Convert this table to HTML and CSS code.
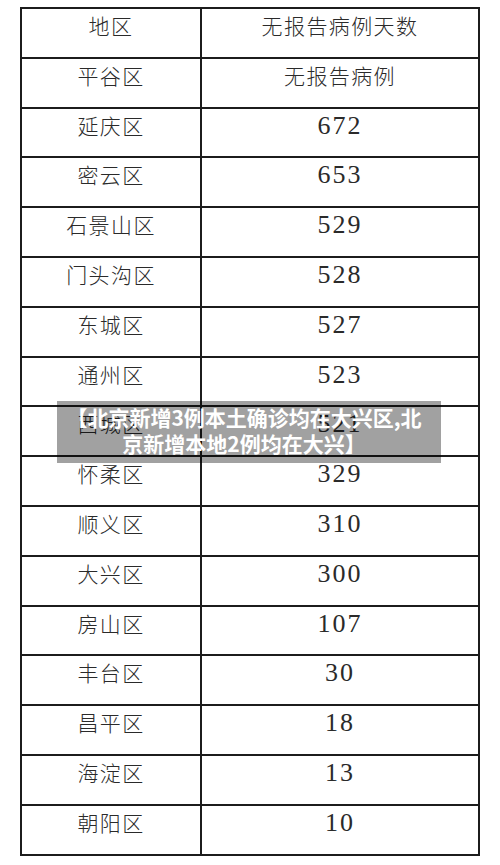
FILE: index.html
```html
<!DOCTYPE html>
<html lang="zh-CN">
<head>
<meta charset="utf-8">
<title>无报告病例天数</title>
<link rel="stylesheet" href="styles.css">
</head>
<body>
<div class="page">
  <div class="table">
    <div class="cell">地区</div><div class="cell">无报告病例天数</div>
    <div class="cell">平谷区</div><div class="cell">无报告病例</div>
    <div class="cell">延庆区</div><div class="cell num">672</div>
    <div class="cell">密云区</div><div class="cell num">653</div>
    <div class="cell">石景山区</div><div class="cell num">529</div>
    <div class="cell">门头沟区</div><div class="cell num">528</div>
    <div class="cell">东城区</div><div class="cell num">527</div>
    <div class="cell">通州区</div><div class="cell num">523</div>
    <div class="cell">西城区</div><div class="cell num">521</div>
    <div class="cell">怀柔区</div><div class="cell num">329</div>
    <div class="cell">顺义区</div><div class="cell num">310</div>
    <div class="cell">大兴区</div><div class="cell num">300</div>
    <div class="cell">房山区</div><div class="cell num">107</div>
    <div class="cell">丰台区</div><div class="cell num">30</div>
    <div class="cell">昌平区</div><div class="cell num">18</div>
    <div class="cell">海淀区</div><div class="cell num">13</div>
    <div class="cell">朝阳区</div><div class="cell num">10</div>
  </div>
  <div class="banner">
    <p class="banner-text">【北京新增3例本土确诊均在大兴区,北京新增本地2例均在大兴】</p>
  </div>
</div>
</body>
</html>
```
FILE: styles.css
```css
html, body {
  margin: 0;
  padding: 0;
  background: #ffffff;
}

.page {
  position: relative;
  width: 500px;
  height: 865px;
  overflow: hidden;
}

.table {
  margin: 7px 0 0 20px;
  width: 460px;
  box-sizing: border-box;
  display: grid;
  grid-template-columns: 178px 1fr;
  grid-auto-rows: 47.8px;
  gap: 2px;
  padding: 2px;
  background: #1c1c1c;
}

.cell {
  background: #ffffff;
  text-align: center;
  padding-top: 6px;
  box-sizing: border-box;
  font-family: "Noto Sans CJK SC", "Noto Sans CJK JP", sans-serif;
  font-weight: 300;
  font-size: 21px;
  line-height: 21px;
  letter-spacing: 1.4px;
  color: #2a2a2a;
}

.num {
  font-family: "Liberation Serif", "Noto Sans CJK SC", serif;
  font-weight: 400;
  font-size: 26px;
  letter-spacing: 2px;
}

.banner {
  position: absolute;
  left: 57px;
  top: 401px;
  width: 384px;
  height: 62px;
  background: rgba(0, 0, 0, 0.37);
  box-sizing: border-box;
  padding: 3px 16px 0 6px;
}

.banner-text {
  margin: 0;
  color: #ffffff;
  font-family: "Noto Sans CJK SC", "Noto Sans CJK JP", sans-serif;
  font-weight: 700;
  font-size: 21px;
  line-height: 26px;
  text-align: center;
}
```
